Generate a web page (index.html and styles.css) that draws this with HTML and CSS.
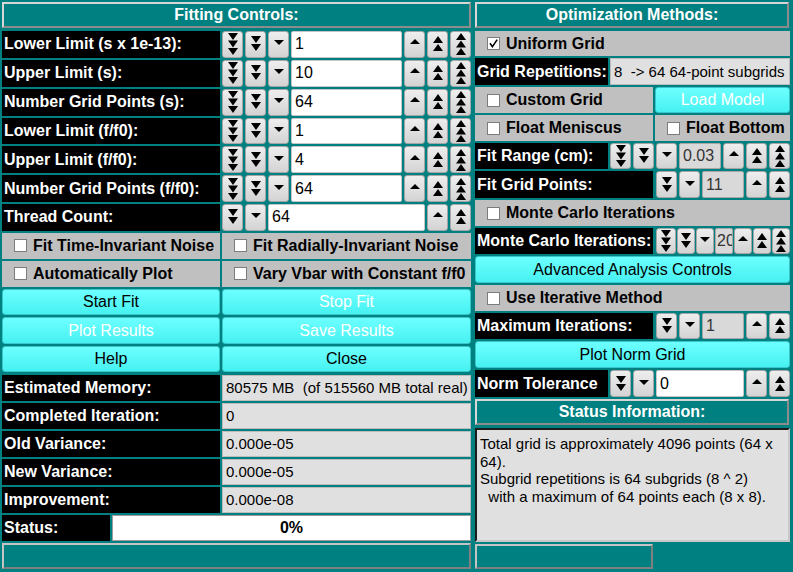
FILE: index.html
```html
<!DOCTYPE html>
<html lang="en">
<head>
<meta charset="utf-8">
<title>Fitting Controls</title>
<link rel="stylesheet" href="styles.css">
</head>
<body>
<svg class="icon-defs" aria-hidden="true">
  <defs>
    <symbol id="d1" viewBox="0 0 12 22"><polygon points="1,7 11,7 6,12"/></symbol>
    <symbol id="d2" viewBox="0 0 12 22"><polygon points="1,3 11,3 6,10"/><polygon points="1,11 11,11 6,18"/></symbol>
    <symbol id="d3" viewBox="0 0 12 22"><polygon points="1,0 11,0 6,7"/><polygon points="1,7.5 11,7.5 6,14.5"/><polygon points="1,15 11,15 6,22"/></symbol>
    <symbol id="u1" viewBox="0 0 12 22"><polygon points="6,6 11,11 1,11"/></symbol>
    <symbol id="u2" viewBox="0 0 12 22"><polygon points="6,3 11,10 1,10"/><polygon points="6,11 11,18 1,18"/></symbol>
    <symbol id="u3" viewBox="0 0 12 22"><polygon points="6,0 11,7 1,7"/><polygon points="6,7.5 11,14.5 1,14.5"/><polygon points="6,15 11,22 1,22"/></symbol>
  </defs>
</svg>

<div class="app">
  <section class="panel panel-left">
    <div class="title">Fitting Controls:</div>

    <div class="row row-l spin-row">
      <div class="label">Lower Limit (s x 1e-13):</div>
      <div class="spin">
        <span class="sbtn"><svg><use href="#d3"/></svg></span>
        <span class="sbtn"><svg><use href="#d2"/></svg></span>
        <span class="sbtn"><svg><use href="#d1"/></svg></span>
        <span class="sfield">1</span>
        <span class="sbtn"><svg><use href="#u1"/></svg></span>
        <span class="sbtn"><svg><use href="#u2"/></svg></span>
        <span class="sbtn"><svg><use href="#u3"/></svg></span>
      </div>
    </div>
    <div class="row row-l spin-row">
      <div class="label">Upper Limit (s):</div>
      <div class="spin">
        <span class="sbtn"><svg><use href="#d3"/></svg></span>
        <span class="sbtn"><svg><use href="#d2"/></svg></span>
        <span class="sbtn"><svg><use href="#d1"/></svg></span>
        <span class="sfield">10</span>
        <span class="sbtn"><svg><use href="#u1"/></svg></span>
        <span class="sbtn"><svg><use href="#u2"/></svg></span>
        <span class="sbtn"><svg><use href="#u3"/></svg></span>
      </div>
    </div>
    <div class="row row-l spin-row">
      <div class="label">Number Grid Points (s):</div>
      <div class="spin">
        <span class="sbtn"><svg><use href="#d3"/></svg></span>
        <span class="sbtn"><svg><use href="#d2"/></svg></span>
        <span class="sbtn"><svg><use href="#d1"/></svg></span>
        <span class="sfield">64</span>
        <span class="sbtn"><svg><use href="#u1"/></svg></span>
        <span class="sbtn"><svg><use href="#u2"/></svg></span>
        <span class="sbtn"><svg><use href="#u3"/></svg></span>
      </div>
    </div>
    <div class="row row-l spin-row">
      <div class="label">Lower Limit (f/f0):</div>
      <div class="spin">
        <span class="sbtn"><svg><use href="#d3"/></svg></span>
        <span class="sbtn"><svg><use href="#d2"/></svg></span>
        <span class="sbtn"><svg><use href="#d1"/></svg></span>
        <span class="sfield">1</span>
        <span class="sbtn"><svg><use href="#u1"/></svg></span>
        <span class="sbtn"><svg><use href="#u2"/></svg></span>
        <span class="sbtn"><svg><use href="#u3"/></svg></span>
      </div>
    </div>
    <div class="row row-l spin-row">
      <div class="label">Upper Limit (f/f0):</div>
      <div class="spin">
        <span class="sbtn"><svg><use href="#d3"/></svg></span>
        <span class="sbtn"><svg><use href="#d2"/></svg></span>
        <span class="sbtn"><svg><use href="#d1"/></svg></span>
        <span class="sfield">4</span>
        <span class="sbtn"><svg><use href="#u1"/></svg></span>
        <span class="sbtn"><svg><use href="#u2"/></svg></span>
        <span class="sbtn"><svg><use href="#u3"/></svg></span>
      </div>
    </div>
    <div class="row row-l spin-row">
      <div class="label">Number Grid Points (f/f0):</div>
      <div class="spin">
        <span class="sbtn"><svg><use href="#d3"/></svg></span>
        <span class="sbtn"><svg><use href="#d2"/></svg></span>
        <span class="sbtn"><svg><use href="#d1"/></svg></span>
        <span class="sfield">64</span>
        <span class="sbtn"><svg><use href="#u1"/></svg></span>
        <span class="sbtn"><svg><use href="#u2"/></svg></span>
        <span class="sbtn"><svg><use href="#u3"/></svg></span>
      </div>
    </div>
    <div class="row row-l spin-row">
      <div class="label">Thread Count:</div>
      <div class="spin">
        <span class="sbtn"><svg><use href="#d2"/></svg></span>
        <span class="sbtn"><svg><use href="#d1"/></svg></span>
        <span class="sfield">64</span>
        <span class="sbtn"><svg><use href="#u1"/></svg></span>
        <span class="sbtn"><svg><use href="#u2"/></svg></span>
      </div>
    </div>

    <div class="row row-l check-line">
      <div class="check-cell"><span class="box"></span>Fit Time-Invariant Noise</div>
      <div class="check-cell"><span class="box"></span>Fit Radially-Invariant Noise</div>
    </div>
    <div class="row row-l check-line">
      <div class="check-cell"><span class="box"></span>Automatically Plot</div>
      <div class="check-cell"><span class="box"></span>Vary Vbar with Constant f/f0</div>
    </div>

    <div class="row row-l btn-row">
      <div class="btn">Start Fit</div>
      <div class="btn off">Stop Fit</div>
    </div>
    <div class="row row-l btn-row">
      <div class="btn off">Plot Results</div>
      <div class="btn off">Save Results</div>
    </div>
    <div class="row row-l btn-row">
      <div class="btn">Help</div>
      <div class="btn">Close</div>
    </div>

    <div class="row row-l info-row info-first">
      <div class="label">Estimated Memory:</div>
      <div class="value">80575 MB  (of 515560 MB total real)</div>
    </div>
    <div class="row row-l info-row">
      <div class="label">Completed Iteration:</div>
      <div class="value">0</div>
    </div>
    <div class="row row-l info-row">
      <div class="label">Old Variance:</div>
      <div class="value">0.000e-05</div>
    </div>
    <div class="row row-l info-row">
      <div class="label">New Variance:</div>
      <div class="value">0.000e-05</div>
    </div>
    <div class="row row-l info-row">
      <div class="label">Improvement:</div>
      <div class="value">0.000e-08</div>
    </div>
    <div class="row row-status info-row">
      <div class="label">Status:</div>
      <div class="progress">0%</div>
    </div>
    <div class="sunken bottom-left"></div>
  </section>

  <section class="panel panel-right">
    <div class="title">Optimization Methods:</div>

    <div class="check-cell r-h25"><span class="box"><svg viewBox="0 0 11 11"><path d="M2 5.2 L4.4 8.6 L9.2 1.6"/></svg></span>Uniform Grid</div>

    <div class="row row-rs r-h27">
      <div class="label">Grid Repetitions:</div>
      <div class="value">8  -&gt; 64 64-point subgrids</div>
    </div>

    <div class="row row-rw r-h26">
      <div class="check-cell"><span class="box"></span>Custom Grid</div>
      <div class="btn off">Load Model</div>
    </div>
    <div class="row row-rw r-h26">
      <div class="check-cell"><span class="box"></span>Float Meniscus</div>
      <div class="check-cell"><span class="box"></span>Float Bottom</div>
    </div>

    <div class="row row-rs r-h26">
      <div class="label">Fit Range (cm):</div>
      <div class="spin">
        <span class="sbtn"><svg><use href="#d3"/></svg></span>
        <span class="sbtn"><svg><use href="#d2"/></svg></span>
        <span class="sbtn"><svg><use href="#d1"/></svg></span>
        <span class="sfield off">0.03</span>
        <span class="sbtn"><svg><use href="#u1"/></svg></span>
        <span class="sbtn"><svg><use href="#u2"/></svg></span>
        <span class="sbtn"><svg><use href="#u3"/></svg></span>
      </div>
    </div>
    <div class="row row-rw r-h27">
      <div class="label">Fit Grid Points:</div>
      <div class="spin spin-inset">
        <span class="sbtn"><svg><use href="#d2"/></svg></span>
        <span class="sbtn"><svg><use href="#d1"/></svg></span>
        <span class="sfield off">11</span>
        <span class="sbtn"><svg><use href="#u1"/></svg></span>
        <span class="sbtn"><svg><use href="#u2"/></svg></span>
      </div>
    </div>

    <div class="check-cell r-h26"><span class="box"></span>Monte Carlo Iterations</div>

    <div class="row row-rw r-h26">
      <div class="label">Monte Carlo Iterations:</div>
      <div class="spin spin-compact">
        <span class="sbtn"><svg><use href="#d3"/></svg></span>
        <span class="sbtn"><svg><use href="#d2"/></svg></span>
        <span class="sbtn"><svg><use href="#d1"/></svg></span>
        <span class="sfield off">20</span>
        <span class="sbtn"><svg><use href="#u1"/></svg></span>
        <span class="sbtn"><svg><use href="#u2"/></svg></span>
        <span class="sbtn"><svg><use href="#u3"/></svg></span>
      </div>
    </div>

    <div class="btn r-h27">Advanced Analysis Controls</div>

    <div class="check-cell r-h26"><span class="box"></span>Use Iterative Method</div>

    <div class="row row-rw r-h26">
      <div class="label">Maximum Iterations:</div>
      <div class="spin spin-inset">
        <span class="sbtn"><svg><use href="#d2"/></svg></span>
        <span class="sbtn"><svg><use href="#d1"/></svg></span>
        <span class="sfield off">1</span>
        <span class="sbtn"><svg><use href="#u1"/></svg></span>
        <span class="sbtn"><svg><use href="#u2"/></svg></span>
      </div>
    </div>

    <div class="btn r-h27">Plot Norm Grid</div>

    <div class="row row-rs r-h27">
      <div class="label">Norm Tolerance</div>
      <div class="spin">
        <span class="sbtn"><svg><use href="#d2"/></svg></span>
        <span class="sbtn"><svg><use href="#d1"/></svg></span>
        <span class="sfield">0</span>
        <span class="sbtn"><svg><use href="#u1"/></svg></span>
        <span class="sbtn"><svg><use href="#u2"/></svg></span>
      </div>
    </div>

    <div class="title title-status">Status Information:</div>

    <div class="textbox">Total grid is approximately 4096 points (64 x 64).
Subgrid repetitions is 64 subgrids (8 ^ 2)
  with a maximum of 64 points each (8 x 8).</div>

    <div class="sunken bottom-right"></div>
  </section>
</div>
</body>
</html>
```

FILE: styles.css
```css
* {
  box-sizing: border-box;
}

body {
  margin: 0;
  width: 793px;
  height: 572px;
  overflow: hidden;
  background: #008080;
  color: #000;
  font-family: "Liberation Sans", Arial, Helvetica, sans-serif;
}

.icon-defs {
  position: absolute;
  width: 0;
  height: 0;
  overflow: hidden;
}

.app {
  display: flex;
  gap: 4px;
  padding: 2px 0 0 2px;
}

.panel {
  display: flex;
  flex-direction: column;
  gap: 2px;
}

.panel-left {
  width: 469px;
}

.panel-right {
  width: 315px;
}

/* ---------- titles ---------- */
.title {
  height: 26px;
  margin-bottom: 1px;
  display: flex;
  align-items: center;
  justify-content: center;
  background: #008080;
  border: 2px solid;
  border-color: #d6d6d6 #8c8c8c #8c8c8c #d6d6d6;
  color: #fff;
  font-weight: bold;
  font-size: 16px;
}

.panel-right .title {
  width: 314px;
}

.title-status {
  margin-bottom: 0;
}

/* ---------- rows ---------- */
.row {
  display: grid;
  gap: 2px;
}

.row-l {
  grid-template-columns: 218px 1fr;
}

.row-status {
  grid-template-columns: 108px 1fr;
}

.row-rs {
  grid-template-columns: 133px 1fr;
}

.row-rw {
  grid-template-columns: 178px 1fr;
}

.spin-row {
  height: 26.85px;
}

.check-line {
  height: 26px;
}

.btn-row {
  height: 26.5px;
}

.info-row {
  height: 26px;
}

.info-first {
  margin-top: 0.5px;
}

.r-h25 {
  height: 25px;
}

.r-h26 {
  height: 26px;
}

.r-h27 {
  height: 27px;
}

/* ---------- labels & values ---------- */
.label {
  display: flex;
  align-items: center;
  padding-left: 2px;
  background: #000;
  color: #fff;
  font-weight: bold;
  font-size: 16px;
  white-space: nowrap;
  overflow: hidden;
}

.value {
  display: flex;
  align-items: center;
  padding-left: 3px;
  background: #e0e0e0;
  border: 1px solid #bcbcbc;
  font-size: 15px;
  white-space: pre;
  overflow: hidden;
}

.progress {
  display: flex;
  align-items: center;
  justify-content: center;
  background: #fff;
  border: 1px solid #9c9c9c;
  font-weight: bold;
  font-size: 16px;
}

/* ---------- spin boxes ---------- */
.spin {
  display: flex;
  gap: 2px;
  min-width: 0;
}

.spin-inset {
  padding-left: 1px;
}

.spin-compact {
  gap: 1px;
  padding-left: 1px;
}

.sbtn {
  flex: none;
  width: 21px;
  display: flex;
  align-items: center;
  justify-content: center;
  background: linear-gradient(#eeeeee, #d3d3d3);
  border: 1px solid #a6a6a6;
  border-radius: 3px;
}

.spin-compact .sbtn {
  width: 18px;
}

.spin-compact .sbtn:first-child {
  width: 20px;
}

.sbtn svg {
  width: 12px;
  height: 22px;
  fill: #000;
}

.sfield {
  flex: 1;
  min-width: 0;
  display: flex;
  align-items: center;
  padding-left: 3px;
  background: #fff;
  border: 1px solid #c6c6c6;
  border-radius: 2px;
  font-size: 16px;
  white-space: nowrap;
  overflow: hidden;
}

.sfield.off {
  background: #d9d9d9;
  border-color: #a8a8a8;
  color: #333;
}

.spin-compact .sfield {
  padding-left: 1px;
}

/* ---------- check boxes ---------- */
.check-cell {
  display: flex;
  align-items: center;
  gap: 6px;
  padding-left: 12px;
  background: #c0c0c0;
  font-weight: bold;
  font-size: 16px;
  white-space: nowrap;
  overflow: hidden;
}

.box {
  flex: none;
  width: 13px;
  height: 13px;
  display: flex;
  background: #fff;
  border: 1px solid #7c7c7c;
}

.box svg {
  width: 11px;
  height: 11px;
}

.box path {
  fill: none;
  stroke: #000;
  stroke-width: 1.6;
}

/* ---------- push buttons ---------- */
.btn {
  display: flex;
  align-items: center;
  justify-content: center;
  background: linear-gradient(#6dffff, #47f1f1);
  border: 1px solid #38c6c6;
  border-radius: 3px;
  font-size: 16px;
  color: #000;
  white-space: nowrap;
}

.btn.off {
  color: #fff;
}

/* ---------- misc boxes ---------- */
.textbox {
  height: 114px;
  margin-top: 1px;
  padding: 5px 3px 3px;
  background: #e0e0e0;
  border: 2px solid;
  border-color: #1c1c1c #c8c8c8 #c8c8c8 #1c1c1c;
  font-size: 15px;
  line-height: 17.6px;
  white-space: pre-wrap;
}

.sunken {
  background: #008080;
  border: 2px solid;
  border-color: #c4c4c4 #808080 #808080 #c4c4c4;
}

.bottom-left {
  height: 26px;
}

.bottom-right {
  width: 178px;
  height: 25px;
}
```
